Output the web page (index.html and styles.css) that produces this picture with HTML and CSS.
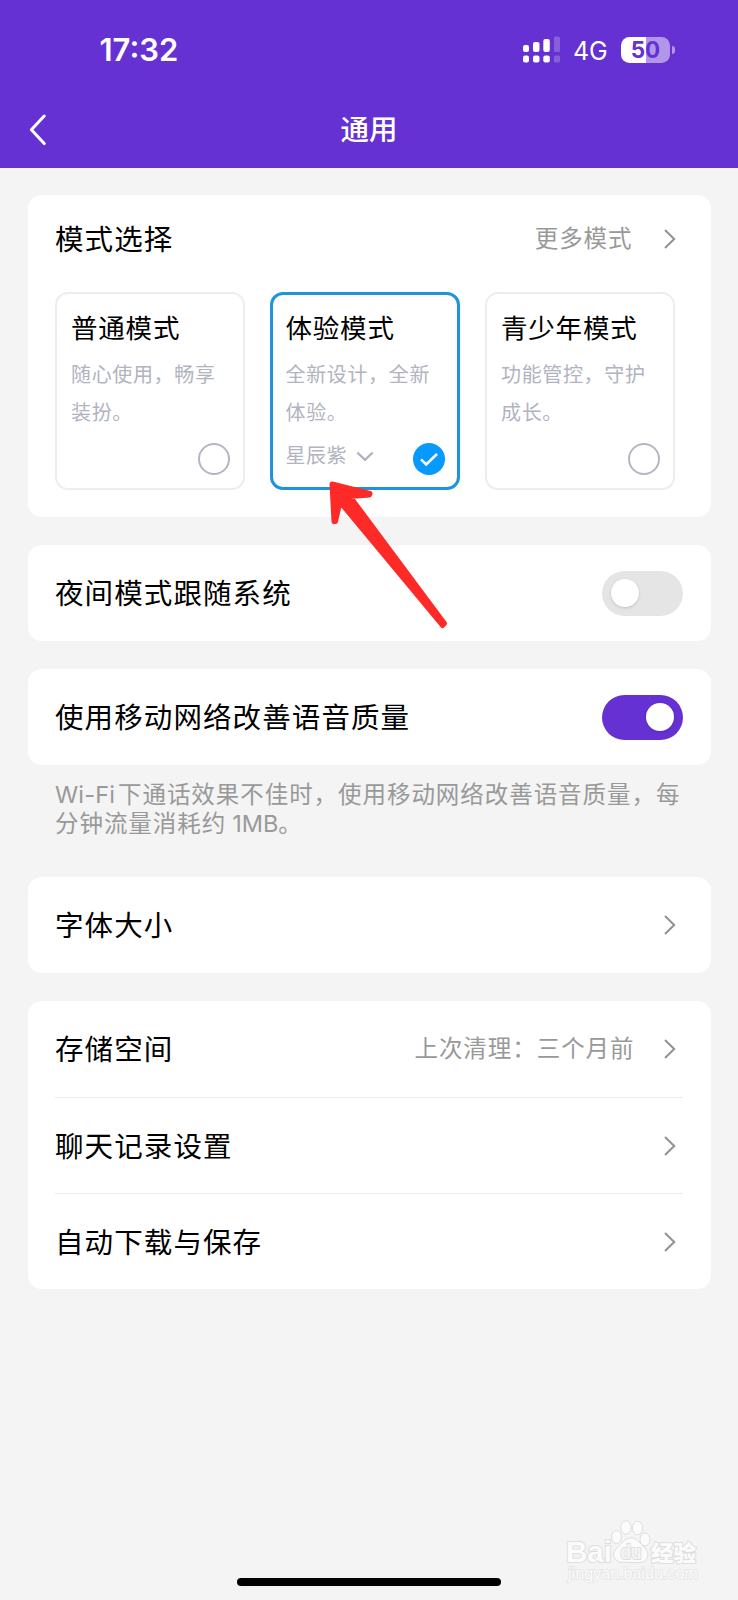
FILE: index.html
```html
<!DOCTYPE html>
<html lang="zh-CN">
<head>
<meta charset="utf-8">
<title>通用</title>
<link rel="stylesheet" href="styles.css">
</head>
<body>
<div class="screen">
  <header class="header">
    <div class="status">
      <span class="time">17:32</span>
      <div class="status-right">
        <svg class="signal" width="38" height="27" viewBox="0 0 38 27" fill="#fff">
          <rect x="0" y="9" width="6" height="7" rx="2"/><rect x="10" y="6" width="6.5" height="10" rx="2"/><rect x="20.3" y="3" width="6.5" height="13" rx="2"/>
          <rect x="0" y="19.5" width="6" height="7" rx="2"/><rect x="10" y="19.5" width="6.5" height="7" rx="2"/><rect x="20.3" y="19.5" width="6.5" height="7" rx="2"/>
          <g opacity=".22"><rect x="31" y="0.5" width="6" height="15.5" rx="1.5"/><rect x="31" y="19.5" width="6" height="7" rx="1.5"/></g>
        </svg>
        <span class="net">4G</span>
        <div class="battery"><span class="level">50</span><i class="nub"></i></div>
      </div>
    </div>
    <nav class="nav">
      <svg class="back" width="17" height="32" viewBox="0 0 17 32" fill="none" stroke="#fff" stroke-width="3" stroke-linecap="round" stroke-linejoin="round"><path d="M15.2 2 2.4 15.8 15.2 29.6"/></svg>
      <h1 class="title">通用</h1>
    </nav>
  </header>

  <main class="content">
    <section class="card modes">
      <div class="row mode-head"><span class="label">模式选择</span><span class="value more">更多模式</span><svg class="chev" viewBox="0 0 12 20"><path d="M1 1 10.2 10 1 19"/></svg></div>
      <div class="mode-list">
        <div class="mode">
          <b class="mode-name">普通模式</b>
          <p class="desc">随心使用，畅享<br>装扮。</p>
          <div class="mode-foot"><i class="radio"></i></div>
        </div>
        <div class="mode selected">
          <b class="mode-name">体验模式</b>
          <p class="desc">全新设计，全新<br>体验。</p>
          <div class="mode-foot">
            <span class="skin">星辰紫</span>
            <svg class="down" width="18" height="11" viewBox="0 0 18 11" fill="none" stroke="#b1b3c1" stroke-width="2.4"><path d="M1.3 1.5 9 8.8 16.7 1.5"/></svg>
            <svg class="check" width="32" height="32" viewBox="0 0 32 32"><circle cx="16" cy="16" r="16" fill="#0699fe"/><path d="M8 16.4 13.2 21.4 24 11" fill="none" stroke="#fff" stroke-width="2.6"/></svg>
          </div>
        </div>
        <div class="mode">
          <b class="mode-name">青少年模式</b>
          <p class="desc">功能管控，守护<br>成长。</p>
          <div class="mode-foot"><i class="radio"></i></div>
        </div>
      </div>
    </section>

    <section class="card"><div class="row"><span class="label">夜间模式跟随系统</span><i class="switch"></i></div></section>
    <section class="card"><div class="row"><span class="label">使用移动网络改善语音质量</span><i class="switch on"></i></div></section>
    <p class="note"><span class="wifi">Wi-Fi</span>下通话效果不佳时，使用移动网络改善语音质量，每<br>分钟流量消耗约<span class="mb">1MB</span>。</p>
    <section class="card"><div class="row"><span class="label">字体大小</span><svg class="chev" viewBox="0 0 12 20"><path d="M1 1 10.2 10 1 19"/></svg></div></section>
    <section class="card">
      <div class="row"><span class="label">存储空间</span><span class="value">上次清理：三个月前</span><svg class="chev" viewBox="0 0 12 20"><path d="M1 1 10.2 10 1 19"/></svg></div>
      <div class="row"><span class="label">聊天记录设置</span><svg class="chev" viewBox="0 0 12 20"><path d="M1 1 10.2 10 1 19"/></svg></div>
      <div class="row"><span class="label">自动下载与保存</span><svg class="chev" viewBox="0 0 12 20"><path d="M1 1 10.2 10 1 19"/></svg></div>
    </section>
  </main>

  <svg class="arrow" width="130" height="160" viewBox="0 0 130 160"><path d="M7 8 45 17.5 44.5 19 25 20.5 119.5 147.5 117.5 149.5 15 26 10.5 45.5 9 45.5Z"/></svg>

  <svg class="watermark" width="136" height="66" viewBox="0 0 136 66">
    <g class="paw">
      <ellipse cx="49.5" cy="17" rx="5" ry="6.5"/>
      <ellipse cx="59" cy="7.5" rx="5.2" ry="6.8"/><ellipse cx="70.5" cy="8" rx="5.2" ry="6.8"/><ellipse cx="78" cy="19.5" rx="5" ry="6.5"/>
      <path d="M64 18C69 18 72 22 76 26C82 31 82 36 79 40C76 43 71 42.5 64 42.5C57 42.5 52 43 49 40C45 36 46 31 52 26C56 22 59 18 64 18Z"/>
    </g>
    <text class="wm-big" x="-1" y="41.5" textLength="46" lengthAdjust="spacingAndGlyphs">Bai</text>
    <text class="wm-du" x="53.5" y="38.5" textLength="21" lengthAdjust="spacingAndGlyphs">du</text>
    <text class="wm-cn" x="84" y="40.5" textLength="45" lengthAdjust="spacingAndGlyphs">经验</text>
    <text class="wm-url" x="1" y="59" textLength="130" lengthAdjust="spacingAndGlyphs">jingyan.baidu.com</text>
  </svg>
  <div class="home"></div>
</div>
</body>
</html>
```
FILE: styles.css
```css
* { box-sizing: border-box; margin: 0; padding: 0; }
body { background: #f4f4f4; font-family: Inter, "Noto Sans CJK SC", sans-serif; color: #000; }
.screen { position: relative; width: 738px; height: 1600px; overflow: hidden; display: flex; flex-direction: column; background: #f4f4f4; }

.header { height: 168px; background: #6531d3; color: #fff; flex: none; }
.status { height: 92px; display: flex; align-items: center; justify-content: space-between; padding: 8px 63px 0 99.5px; }
.time { font-size: 31px; font-weight: 600; line-height: 40px; }
.status-right { display: flex; align-items: center; margin-top: -1px; }
.net { font-size: 25px; line-height: 30px; margin: 2px 0 0 12px; width: 35px; white-space: nowrap; letter-spacing: -.2px; }
.battery { position: relative; width: 49px; height: 26px; margin: 0 5px 0 13px; border-radius: 8.5px; background: linear-gradient(90deg, #fff 51%, #b297e9 51%); display: flex; align-items: center; justify-content: center; }
.level { color: #6531d3; font-size: 22.5px; font-weight: 700; line-height: 26px; }
.nub { position: absolute; left: 51px; top: 9px; width: 3px; height: 8px; border-radius: 0 3px 3px 0; background: #b297e9; }
.nav { height: 76px; display: grid; grid-template-columns: 50px 1fr 50px; align-items: center; }
.back { justify-self: start; margin: -1px 0 0 28.5px; }
.title { font-size: 28.5px; font-weight: 500; line-height: 40px; text-align: center; }

.content { padding: 27px 27.5px 0; display: flex; flex-direction: column; gap: 28px; }
.card { background: #fff; border-radius: 14px; padding: 0 27.5px; }
.row { height: 96px; display: flex; align-items: center; }
.row + .row { border-top: 1px solid #ebebeb; }
.label { font-size: 28.5px; letter-spacing: 1.1px; line-height: 40px; padding-top: 2px; flex: 1; }
.value { font-size: 23.5px; letter-spacing: .95px; line-height: 34px; color: #999; margin-right: 29px; }
.more { margin-right: 31px; }
.chev { width: 12px; height: 20px; margin-right: 7.5px; fill: none; stroke: #929292; stroke-width: 2; }

.modes { height: 322px; }
.mode-head { height: 97px; padding-bottom: 10px; }
.mode-list { display: grid; grid-template-columns: repeat(3, 190px); gap: 25px; }
.mode { height: 198px; border: 2px solid #ececf3; border-radius: 13px; padding: 13.5px 13px 0 14px; background: #fff; }
.selected { border: 3px solid #1e95db; padding: 12.5px 12px 0 12.5px; }
.mode-name { display: block; font-size: 26.5px; font-weight: 400; letter-spacing: .8px; line-height: 40px; white-space: nowrap; }
.desc { font-size: 20px; letter-spacing: .65px; line-height: 38px; color: #b1b3c1; margin-top: 8px; white-space: nowrap; }
.mode-foot { display: flex; align-items: center; height: 32px; margin-top: 11px; }
.radio { width: 32px; height: 32px; border: 2px solid #b5b6c2; border-radius: 50%; margin-left: auto; }
.skin { font-size: 20px; letter-spacing: .5px; line-height: 32px; color: #b1b3c1; margin-top: -5px; }
.down { margin: -5px 0 0 9px; }
.check { margin-left: auto; }

.switch { width: 81px; height: 45px; border-radius: 23px; background: #e5e5e5; padding: 8.5px 9px; display: flex; }
.switch::before { content: ""; width: 28px; height: 28px; border-radius: 50%; background: #fff; box-shadow: 0 1px 3px rgba(0,0,0,.16); }
.on { background: #6531d3; justify-content: flex-end; }

.note { font-size: 23.5px; letter-spacing: .95px; line-height: 28.6px; color: #999; padding-left: 27.5px; margin: -12px -27px 11px 0; height: 57px; white-space: nowrap; }
.wifi { display: inline-block; width: 63px; letter-spacing: .2px; }
.mb { display: inline-block; padding-left: 6px; letter-spacing: 0; }

.arrow { position: absolute; left: 325px; top: 476px; }
.arrow path { fill: #fd2a28; stroke: #fd2a28; stroke-width: 5; stroke-linejoin: round; }
.watermark { position: absolute; left: 567px; top: 1520px; fill: #fbfbfb; stroke: #dedede; stroke-width: 1; overflow: visible; }
.watermark text { font-family: "Liberation Sans", "Noto Sans CJK SC", sans-serif; paint-order: stroke; stroke-width: 2px; }
.wm-big { font-size: 30px; font-weight: 700; }
.watermark .wm-du { font-size: 20px; font-weight: 700; fill: #f4f4f4; }
.watermark .wm-cn { font-size: 22px; font-weight: 900; }
.watermark .wm-url { font-size: 16px; stroke-width: 1.5px; stroke: #e4e4e4; }
.home { position: absolute; left: 237px; top: 1578px; width: 264px; height: 8px; border-radius: 4px; background: #000; }
```
